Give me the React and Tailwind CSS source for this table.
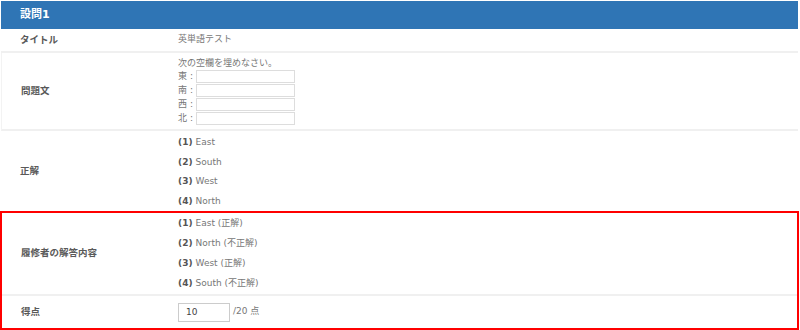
const FONT = "font-['DejaVu_Sans','Noto_Sans_CJK_JP',sans-serif]";

const blanks = ['東', '南', '西', '北'];
const answers = ['East', 'South', 'West', 'North'];
const responses = [
  ['East', '正解'],
  ['North', '不正解'],
  ['West', '正解'],
  ['South', '不正解'],
];

function Label({ children, w = 'w-[177px]' }) {
  return (
    <div className={`${w} shrink-0 pl-[19px] flex items-center text-[9.5px] font-semibold text-[#595959]`}>
      {children}
    </div>
  );
}

function Item({ no, text, h }) {
  return (
    <div className={`${h} flex items-center text-[9px]`}>
      <span className="font-bold text-[#555]">({no})</span>
      <span className="ml-[3px] text-[#777]">{text}</span>
    </div>
  );
}

export default function App() {
  return (
    <div className={`w-[800px] h-[330px] bg-white pt-px pl-px ${FONT}`}>
      <div className="w-[797px]">
        <div className="h-[28px] bg-[#2f75b5] pl-[19px] flex items-center text-[11px] font-bold text-white">
          設問1
        </div>

        <div className="flex h-[24px] border-b-2 border-[#f0f0f0]">
          <Label>タイトル</Label>
          <div className="flex items-center text-[9px] text-[#777]">英単語テスト</div>
        </div>

        <div className="flex h-[78px] border-b-2 border-[#f0f0f0] border-l border-l-[#f3f3f3]">
          <Label w="w-[176px]">問題文</Label>
          <div className="pt-[4px] text-[9px] text-[#777]">
            <div className="leading-[13px]">次の空欄を埋めなさい。</div>
            {blanks.map(b => (
              <div key={b} className="flex items-center h-[13px] mb-px">
                <span className="w-[18px]">{b} :</span>
                <div className="w-[99px] h-[13px] border border-[#ddd] bg-white" />
              </div>
            ))}
          </div>
        </div>

        <div className="flex h-[80px]">
          <Label>正解</Label>
          <div className="pt-[2px]">
            {answers.map((a, i) => (
              <Item key={a} no={i + 1} text={a} h="h-[19.5px]" />
            ))}
          </div>
        </div>

        <div className="border-2 border-[#ff0000] -ml-px w-[799px]">
          <div className="flex h-[83px] border-b-2 border-[#f0f0f0]">
            <Label w="w-[176px]">履修者の解答内容</Label>
            <div className="pt-px">
              {responses.map(([a, r], i) => (
                <Item key={a} no={i + 1} text={`${a} (${r})`} h="h-[20px]" />
              ))}
            </div>
          </div>
          <div className="flex h-[32px]">
            <Label w="w-[176px]">得点</Label>
            <div className="flex items-center text-[9px] text-[#777]">
              <input
                readOnly
                value="10"
                className="w-[52px] h-[19px] border border-[#ccc] pl-[7px] text-[9px] text-[#444] outline-none"
              />
              <span className="ml-[3px]">/20 点</span>
            </div>
          </div>
        </div>
      </div>
    </div>
  );
}
